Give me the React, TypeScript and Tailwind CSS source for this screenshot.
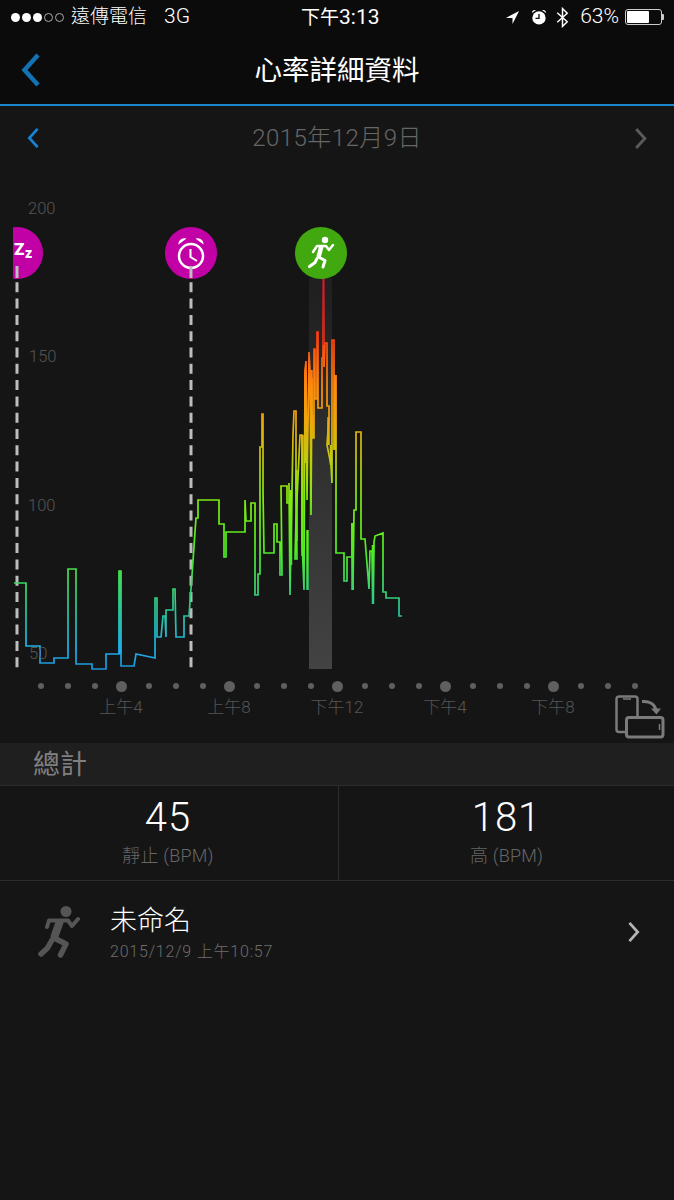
import React from "react";

const font = "font-['Roboto','Noto_Sans_CJK_TC',sans-serif]";

// heart rate trace, x y pairs read off the screenshot
const trace =
	"14,583 26,583 26,646 40,646 40,663 54,663 54,658 68,658 68,569 76,569 76,664 92,664 92,669 106,669 106,654 119,654 119,571 121,571 121,666 134,666 136,654 155,658 155,598 157,598 157,637 161,637 163,616 165,616 166,637 166,610 173,610 173,589 175,589 176,637 184,637 184,616 189,616 192,575 196,518 198,518 198,500 219,500 219,524 224,524 224,557 226,557 226,532 245,532 245,500 246,521 251,521 251,503 255,503 255,595 258,595 258,574 260,574 260,447 262,447 262,414 263,414 263,491 264,553 274,553 274,524 277,524 277,542 280,542 280,575 282,575 281,486 287,486 287,503 289,503 289,483 290,595 292,490 293,435 294,411 296,411 296,477 297,559 295,559 296,520 300,435 302,435 302,540 304,590 305,370 306,361 307,500 309,352 310,370 311,515 312,378 312,438 314,438 314,349 315,349 315,399 317,399 317,332 318,332 318,408 322,408 322,358 323,358 323.500,278 324,367 325,343 327,343 327,406 329,406 329,417 327,445 331,465 332,483 332,340 334,340 334,450 336,375 336,553 344,553 344,581 347,581 347,557 352,557 352,523 353,590 354,510 356,510 356,432 361,432 361,539 365,539 369,589 370,551 372,551 373,604 374,542 375,536 383,533 383,592 386,592 386,598 399,598 399,616 402,616";

// strokes where the trace is so dense it reads as a solid band
const dense = [
	"M291 490V565", "M296.500 470V541", "M302.500 435V556", "M305.500 370V463", "M307.500 530V590",
	"M311.500 370V415", "M312.500 415V438", "M328.500 417V445", "M331 445V465", "M335 375V450",
	"M352.500 523V590", "M373 545V604", "M120 571V654",
];

const yLabels = [
	{ text: "200", cls: "top-[29px] left-[28px]" },
	{ text: "150", cls: "top-[177px] left-[29px]" },
	{ text: "100", cls: "top-[326px] left-[28px]" },
	{ text: "50", cls: "top-[474px] left-[29px]" },
];

const dots = Array.from({ length: 23 }, (_, i) => i);
const ticks = ["上午4", "上午8", "下午12", "下午4", "下午8"];

function Chevron({ left, className }: { left?: boolean; className: string }) {
	return (
		<svg viewBox="0 0 14 24" className={className} fill="none" stroke="currentColor" strokeWidth="3">
			<path d={left ? "M12 2 3 12l9 10" : "M2 2l9 10-9 10"} />
		</svg>
	);
}

function Runner({ className }: { className: string }) {
	return (
		<svg viewBox="0 0 42 52" className={className} fill="none" stroke="currentColor" strokeLinecap="round" strokeLinejoin="round">
			<circle cx="28" cy="5.500" r="5.500" fill="currentColor" stroke="none" />
			<path d="M9 21 11 14.500H30L34 20 40 13" strokeWidth="4" />
			<path d="M22 15 16 32" strokeWidth="8" strokeLinecap="butt" />
			<path d="M16 32 28 38 22.500 49" strokeWidth="5.500" />
			<path d="M14 34 9.500 42 3 48" strokeWidth="5.500" />
		</svg>
	);
}

function PhoneRotate() {
	return (
		<svg viewBox="0 0 50 44" className="w-[50px] h-[44px] text-[#7b7b7b]" fill="none" stroke="currentColor">
			<path d="M11 37H4A2.500 2.500 0 0 1 1.500 34.500V4A2.500 2.500 0 0 1 4 1.500h16A2.500 2.500 0 0 1 22.500 4V22" strokeWidth="2.500" />
			<path d="M8 4h8" strokeWidth="1.500" />
			<rect x="11.500" y="22.500" width="36.500" height="19.500" rx="2.500" strokeWidth="3" />
			<path d="M44.500 29v6" strokeWidth="1.500" />
			<path d="M27 6.500c7-.5 13 2 14 9" strokeWidth="3" />
			<path d="M36 13.500 41.500 19.500 46 13.500z" fill="currentColor" stroke="none" />
		</svg>
	);
}

function Chart() {
	return (
		<div className="relative h-[510px]">
			<svg viewBox="0 170 674 510" className="block w-[674px] h-[510px]" fill="none">
				<defs>
					<linearGradient id="hr" gradientUnits="userSpaceOnUse" x1="0" y1="280" x2="0" y2="670">
						<stop offset="0" stopColor="#e8142c" />
						<stop offset="0.15" stopColor="#ff420e" />
						<stop offset="0.27" stopColor="#ff8a0e" />
						<stop offset="0.36" stopColor="#eea60c" />
						<stop offset="0.46" stopColor="#c0cc0c" />
						<stop offset="0.56" stopColor="#80ea10" />
						<stop offset="0.69" stopColor="#52ee22" />
						<stop offset="0.85" stopColor="#2cc49a" />
						<stop offset="0.95" stopColor="#1eaeec" />
						<stop offset="1" stopColor="#1a94d8" />
					</linearGradient>
					<linearGradient id="band" gradientUnits="userSpaceOnUse" x1="0" y1="278" x2="0" y2="670">
						<stop offset="0" stopColor="#1f1f1f" />
						<stop offset="1" stopColor="#434343" />
					</linearGradient>
					<clipPath id="zclip">
						<rect x="13" y="220" width="40" height="70" />
					</clipPath>
				</defs>

				<rect x="309" y="278" width="23" height="391" fill="url(#band)" />

				<path d="M17 266V668M191 266V668" stroke="#bdbdbd" strokeWidth="3" strokeDasharray="10 6.300" />
				<polyline points={trace} stroke="url(#hr)" strokeWidth="1.700" strokeLinejoin="miter" />
				<path d={dense.join(" ")} stroke="url(#hr)" strokeWidth="2.500" />
				<path d="M323.500 278V345" stroke="#e0182c" strokeWidth="1.500" />

				{/* sleep marker, cut off by the chart's left edge */}
				<g clipPath="url(#zclip)">
					<circle cx="17" cy="253" r="26" fill="#c100a5" />
					<text x="14" y="255" fontSize="17" fontWeight="900" fill="#fff" fontFamily="Roboto, sans-serif">Z</text>
					<text x="25" y="258" fontSize="14" fontWeight="900" fill="#fff" fontFamily="Roboto, sans-serif">z</text>
				</g>
				<path d="M17 266v12" stroke="#bdbdbd" strokeWidth="3" />

				{/* alarm marker */}
				<circle cx="191" cy="253" r="26" fill="#c100a5" />
				<circle cx="191" cy="256" r="12" stroke="#fff" strokeWidth="2.500" />
				<path d="M190.500 249v8l6.500 4" stroke="#fff" strokeWidth="2" />
				<path d="M178.500 244.500c-.5-4 3.500-7.500 8-6zM203.500 244.500c.5-4-3.500-7.500-8-6z" fill="#fff" />
				<path d="M191 266v12" stroke="#bdbdbd" strokeWidth="3" />

				{/* activity marker */}
				<circle cx="321" cy="253" r="26" fill="#42a80f" />
				<g stroke="#fff" strokeLinecap="round" strokeLinejoin="round">
					<circle cx="325" cy="240" r="3.200" fill="#fff" stroke="none" />
					<path d="M313 252 317 246H326L329 250 333 245" strokeWidth="2.500" />
					<path d="M321.500 246 318.500 257" strokeWidth="4.500" strokeLinecap="butt" />
					<path d="M318.500 257 325 260.500 323 267" strokeWidth="3" />
					<path d="M317 258.500 315 262.500 309.500 266.500" strokeWidth="3" />
				</g>
			</svg>
			{yLabels.map((l) => (
				<span key={l.text} className={`absolute ${l.cls} text-[16.500px] leading-[20px] font-light text-[#555] ${font}`}>
					{l.text}
				</span>
			))}
		</div>
	);
}

export default function App() {
	return (
		<div className={`w-[674px] h-[1200px] bg-[#151515] flex flex-col ${font}`}>
			<div className="bg-[#0b0b0b] h-[104px] flex flex-col shrink-0">
				<div className="h-[34px] relative flex items-center justify-between pl-[11px] pr-[10px] text-white text-[19px] font-light">
					<div className="flex items-center">
						<div className="flex gap-[2px] items-center">
							{[0, 1, 2].map((i) => (
								<span key={i} className="w-[9px] h-[9px] rounded-full bg-white" />
							))}
							{[0, 1].map((i) => (
								<span key={i} className="w-[9px] h-[9px] rounded-full border border-[#aaa]" />
							))}
						</div>
						<span className="ml-[7px]">遠傳電信</span>
						<span className="ml-[17px] text-[21px]">3G</span>
					</div>
					<span className="absolute left-[301px] top-[4px] leading-[26px] font-normal">
						下午<span className="text-[21px]">3:13</span>
					</span>
					<div className="flex items-center">
						<svg viewBox="0 0 16 16" className="w-[15px] h-[15px] mr-[11px]" fill="#fff">
							<path d="M15 1 1 8.500h7V15z" />
						</svg>
						<svg viewBox="0 0 18 18" className="w-[16px] h-[16px] mr-[9px]" fill="#fff">
							<circle cx="9" cy="10" r="7.500" />
							<path d="M1 4.500C1 2 3.500.5 5.500 1.500zM17 4.500C17 2 14.500.5 12.500 1.500z" />
							<path d="M9 5.500V10.500H5" fill="none" stroke="#0b0b0b" strokeWidth="1.500" />
						</svg>
						<svg viewBox="0 0 12 20" className="w-[13px] h-[21px] mr-[11px]" fill="none" stroke="#fff" strokeWidth="1.400">
							<path d="M1 5.500 10.500 14 6 18.500v-17L10.500 6 1 14.500" />
						</svg>
						<span className="text-[21px]">63%</span>
						<div className="ml-[6px] flex items-center">
							<div className="w-[37px] h-[16px] border border-[#ccc] rounded-[3px] p-[1px]">
								<div className="h-full w-[22px] bg-white rounded-[1px]" />
							</div>
							<div className="w-[2px] h-[6px] bg-[#ccc] rounded-r-[1px]" />
						</div>
					</div>
				</div>
				<div className="h-[70px] relative flex items-center justify-center">
					<Chevron left className="absolute left-[19px] top-[18px] w-[23px] h-[36px] text-[#1272b4]" />
					<span className="text-white text-[27.500px] font-normal leading-none mt-[3px]">心率詳細資料</span>
				</div>
			</div>
			<div className="h-[2px] bg-[#1a86cc] shrink-0" />

			<div className="h-[64px] relative flex items-center justify-center shrink-0">
				<Chevron left className="absolute left-[26px] top-[21px] w-[14px] h-[22px] text-[#1583d4]" />
				<span className="text-[24px] text-[#666] font-light tracking-[0.45px]">2015年12月9日</span>
				<Chevron className="absolute left-[634px] top-[21px] w-[14px] h-[23px] text-[#5a5a5a]" />
			</div>

			<Chart />

			<div className="relative h-[63px] shrink-0">
				<div className="flex pl-[27px] h-[12px] items-center">
					{dots.map((i) => (
						<div key={i} className="w-[27px] flex justify-center">
							<span className={(i - 3) % 4 === 0 ? "w-[11px] h-[11px] rounded-full bg-[#5f5f5f]" : "w-[6px] h-[6px] rounded-full bg-[#5f5f5f]"} />
						</div>
					))}
				</div>
				<div className="flex pl-[67px] mt-[5px]">
					{ticks.map((t) => (
						<span key={t} className="w-[108px] text-center text-[17px] leading-[20px] font-light text-[#555]">
							{t}
						</span>
					))}
				</div>
				<div className="absolute left-[615px] top-[15px]">
					<PhoneRotate />
				</div>
			</div>

			<div className="h-[42px] bg-[#1f1f1f] pl-[33px] pt-[3px] flex items-center shrink-0 text-[27px] text-[#808080]">總計</div>

			<div className="h-[96px] flex border-y border-[#2c2c2c] shrink-0">
				<div className="w-[339px] pr-[2px] flex flex-col items-center border-r border-[#2c2c2c]">
					<span className="text-[40px] leading-[48px] mt-[8px] font-light text-white tracking-[1px]">45</span>
					<span className="text-[18px] leading-[24px] mt-[2px] font-light text-[#666] tracking-[0.2px]">靜止 (BPM)</span>
				</div>
				<div className="flex-1 flex flex-col items-center">
					<span className="text-[40px] leading-[48px] mt-[8px] font-light text-white tracking-[1px]">181</span>
					<span className="text-[18px] leading-[24px] mt-[2px] font-light text-[#666] tracking-[0.2px]">高 (BPM)</span>
				</div>
			</div>

			<div className="h-[102px] flex items-center relative shrink-0">
				<Runner className="absolute left-[38px] top-[25px] w-[42px] h-[52px] text-[#555]" />
				<div className="pl-[110px] pt-[2px] flex flex-col">
					<span className="text-[27px] leading-[34px] font-light text-white">未命名</span>
					<span className="text-[16px] leading-[22px] font-light text-[#6e6e6e] mt-[3px] tracking-[0.8px]">2015/12/9 上午10:57</span>
				</div>
				<Chevron className="absolute left-[627px] top-[40px] w-[14px] h-[22px] text-[#b5b5b5]" />
			</div>
		</div>
	);
}
